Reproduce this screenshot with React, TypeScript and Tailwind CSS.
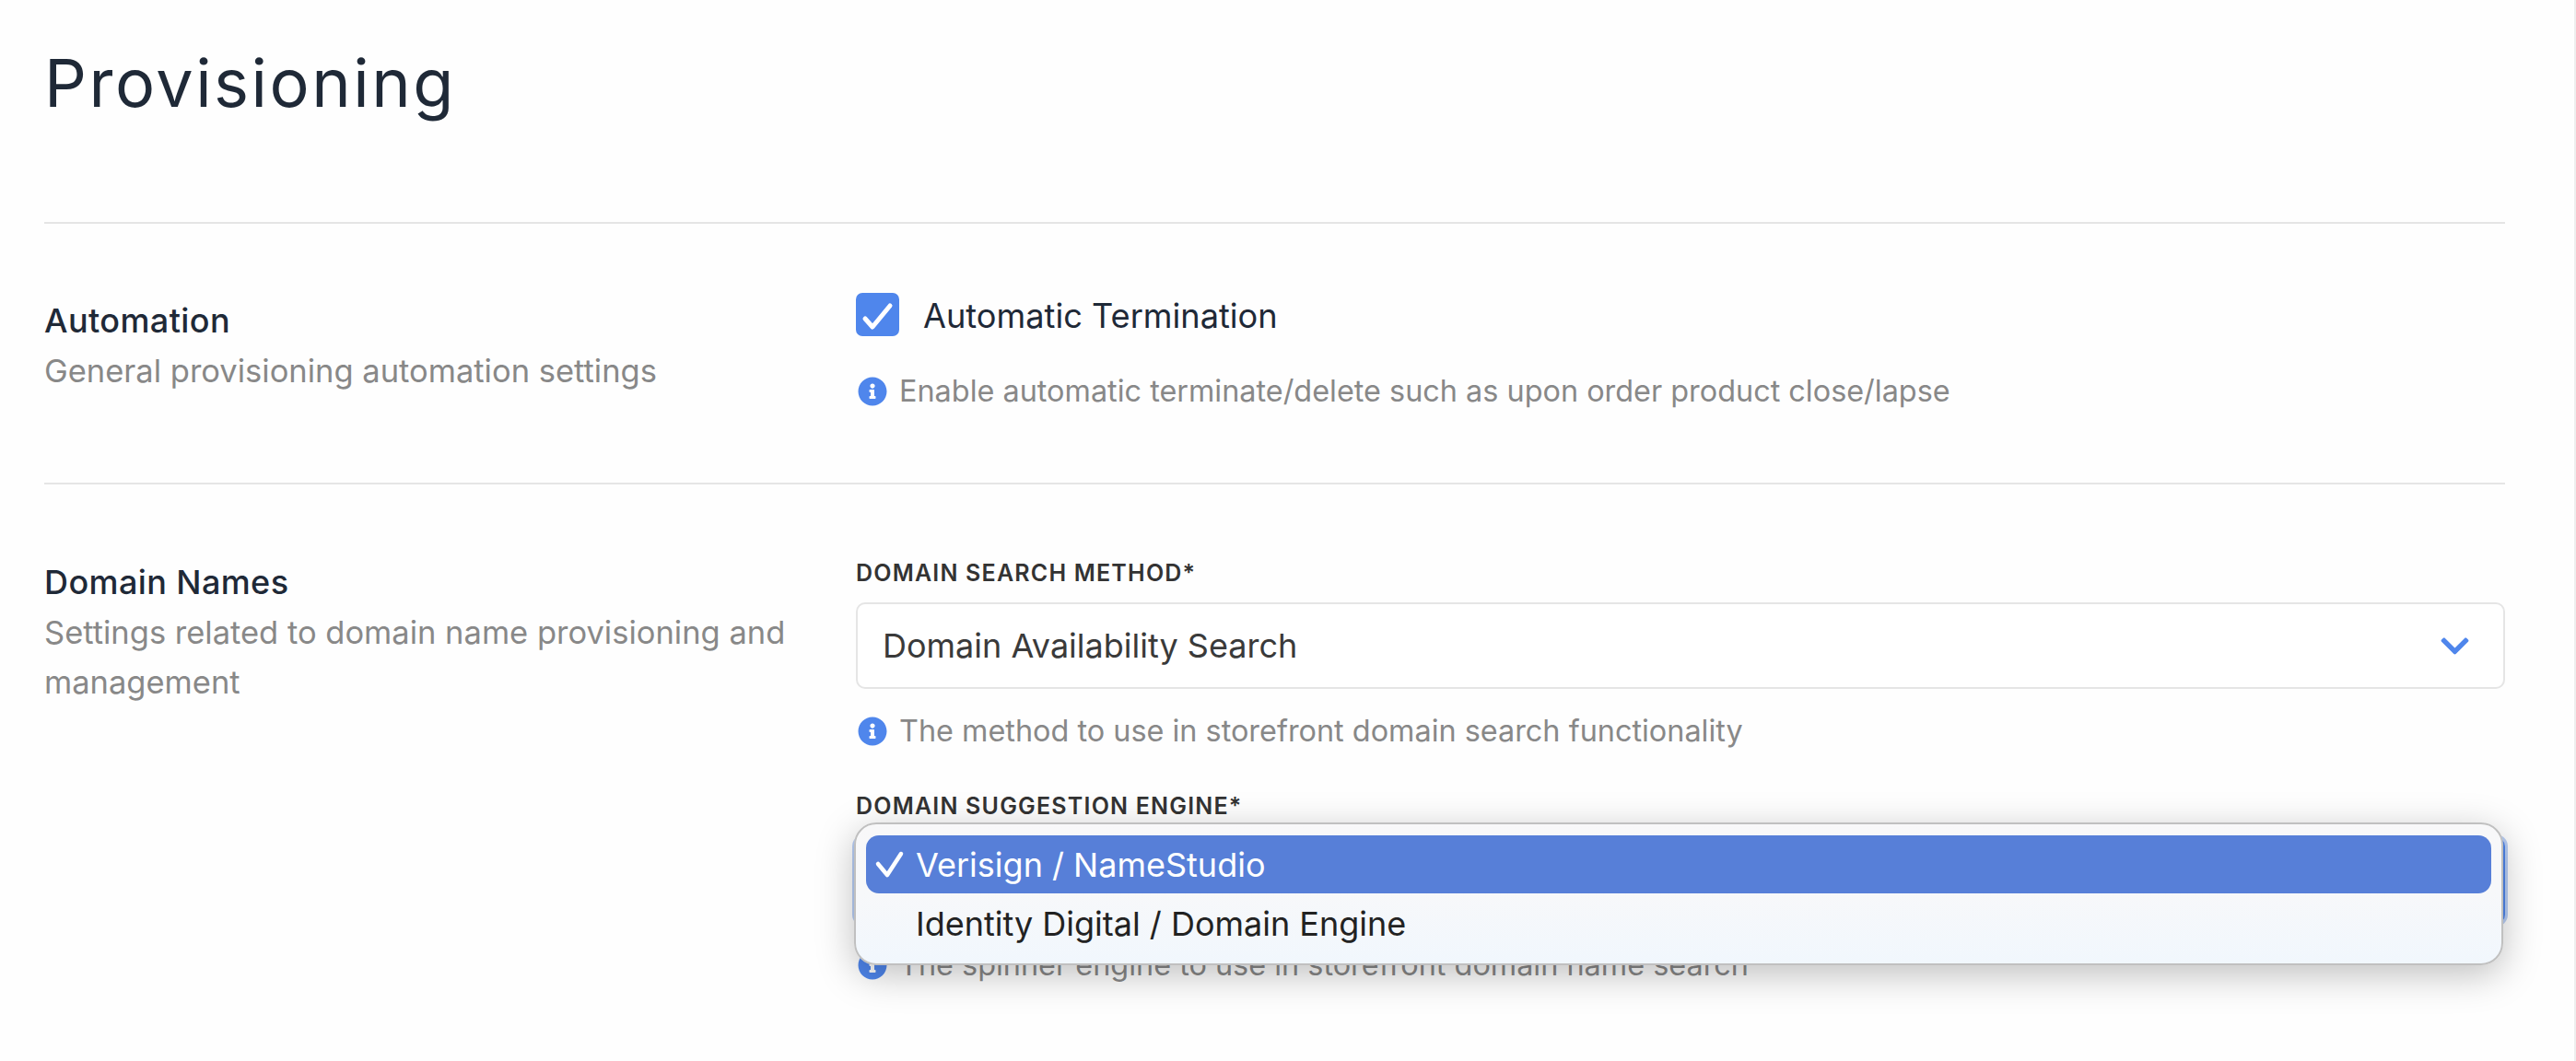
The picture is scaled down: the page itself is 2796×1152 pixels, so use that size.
import { FaChevronDown, FaInfoCircle } from 'react-icons/fa';

function Help({ children }: { children: string }) {
  return (
    <div className="flex items-center h-[40px]">
      <FaInfoCircle className="w-[32px] h-[32px] ml-[3px] text-[#4f86ec] shrink-0" />
      <span className="ml-[13px] text-[32.4px] leading-[40px] text-[#888888] whitespace-nowrap">{children}</span>
    </div>
  );
}

function FieldLabel({ children }: { children: string }) {
  return (
    <div className="h-[30px] pl-[1px] text-[25px] leading-[30px] font-semibold tracking-[1.2px] text-[#333333] uppercase whitespace-nowrap">
      {children}
    </div>
  );
}

function SectionIntro({ title, lines }: { title: string; lines: string[] }) {
  return (
    <div className="w-[880px] shrink-0">
      <div className="text-[36px] leading-[44px] font-medium tracking-[0.4px] text-[#1f2937]">{title}</div>
      <div className="mt-[6px] text-[34.5px] leading-[54px] text-[#888888]">
        {lines.map(line => (
          <div key={line} className="whitespace-nowrap">{line}</div>
        ))}
      </div>
    </div>
  );
}

export default function App() {
  return (
    <div className="relative w-[2796px] h-[1152px] overflow-hidden bg-[#fefefe] font-['Inter','Liberation_Sans',sans-serif]">
      <div className="pl-[48px] pr-[77px]">
        <h1 className="pt-[48px] h-[241px] text-[72px] leading-[84px] font-normal tracking-[2.5px] text-[#1f2937]">Provisioning</h1>

        <section className="flex h-[285px] border-y-2 border-[#e5e5e5] pt-[83px]">
          <SectionIntro title="Automation" lines={['General provisioning automation settings']} />
          <div className="flex-1">
            <label className="flex items-center h-[47px] mt-[-8px]">
              <span className="flex items-center justify-center w-[47px] h-[47px] ml-[1px] rounded-[7px] bg-[#4f86ec]">
                <svg viewBox="0 0 47 47" className="w-[47px] h-[47px]" fill="none" stroke="#ffffff" strokeWidth="5" strokeLinecap="round" strokeLinejoin="round">
                  <path d="M10 28 L18 37 L37 14" />
                </svg>
              </span>
              <span className="ml-[26px] pt-[4px] text-[36.2px] leading-[47px] text-[#1f2937]">Automatic Termination</span>
            </label>
            <div className="mt-[40px]">
              <Help>Enable automatic terminate/delete such as upon order product close/lapse</Help>
            </div>
          </div>
        </section>

        <section className="flex pt-[84px]">
          <SectionIntro title="Domain Names" lines={['Settings related to domain name provisioning and', 'management']} />
          <div className="flex-1 mt-[-3px]">
            <FieldLabel>Domain Search Method*</FieldLabel>
            <div className="flex items-center justify-between h-[94px] ml-[1px] mt-[17px] pl-[27px] pr-[35px] rounded-[10px] border-2 border-[#e5e5e5] bg-white">
              <span className="text-[36px] text-[#3a3a3a]">Domain Availability Search</span>
              <FaChevronDown className="w-[35px] h-[35px] text-[#4f86ec]" />
            </div>
            <div className="mt-[26px]">
              <Help>The method to use in storefront domain search functionality</Help>
            </div>
            <div className="mt-[46px]">
              <FieldLabel>Domain Suggestion Engine*</FieldLabel>
            </div>
            <div className="h-[94px] mt-[19px] rounded-[10px] border-2 border-[#4f86ec] ring-[3px] ring-[#4f86ec]/40 bg-white" />
            <div className="mt-[25px]">
              <Help>The spinner engine to use in storefront domain name search</Help>
            </div>
          </div>
        </section>
      </div>

      {/* native select popup, sits over the field below the label */}
      <div className="absolute left-[927px] top-[893px] w-[1790px] h-[155px] px-[11px] pt-[12px] rounded-[24px] border-2 border-[#c0c0c0] bg-gradient-to-b from-[#f8f8f9] via-[#f7f8fa] to-[#f1f7fd] shadow-[0_10px_40px_rgba(0,0,0,0.25)]">
        <div className="flex items-center h-[63px] rounded-[14px] bg-[#577fd8] text-white">
          <svg viewBox="0 0 54 63" className="w-[54px] h-[63px] shrink-0" fill="none" stroke="#ffffff" strokeWidth="4.5" strokeLinecap="round" strokeLinejoin="round">
            <path d="M13 31 L23 43 L38 20" />
          </svg>
          <span className="text-[36px]">Verisign / NameStudio</span>
        </div>
        <div className="flex items-center h-[66px] pl-[54px] text-[36px] text-[#222222]">Identity Digital / Domain Engine</div>
      </div>

      <div className="absolute right-0 top-0 w-[2px] h-full bg-[#eeeeee]" />
    </div>
  );
}
